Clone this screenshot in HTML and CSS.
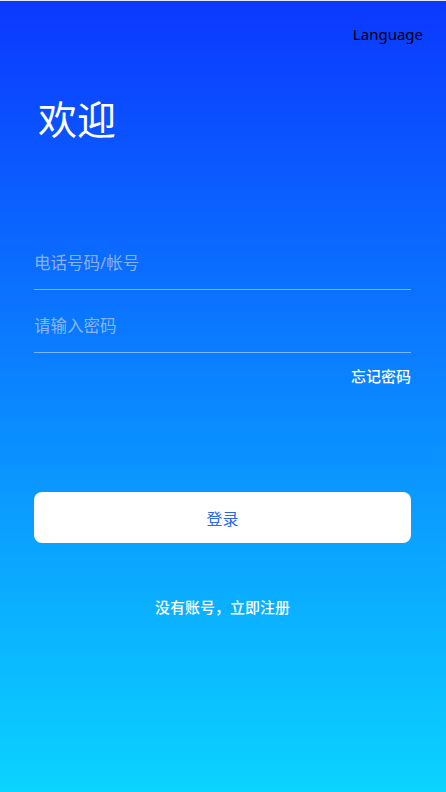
FILE: index.html
```html
<!DOCTYPE html>
<html lang="zh-CN">
<head>
    <meta charset="UTF-8">
    <meta name="viewport" content="width=device-width, initial-scale=1.0">
    <title>登录</title>
    <link rel="stylesheet" href="styles.css">
</head>
<body>
    <div class="login">
        <div class="login-top">
            <span class="language">Language</span>
        </div>
        <h1 class="welcome">欢迎</h1>
        <form class="login-form">
            <div class="field">
                <input type="text" placeholder="电话号码/帐号">
            </div>
            <div class="field">
                <input type="password" placeholder="请输入密码">
            </div>
            <div class="forgot">忘记密码</div>
            <button type="button" class="login-btn">登录</button>
        </form>
        <div class="register">没有账号，立即注册</div>
    </div>
</body>
</html>
```

FILE: styles.css
```css
* {
    box-sizing: border-box;
}
body {
    margin: 0;
    font-family: "Noto Sans", "Noto Sans CJK SC", sans-serif;
}
.login {
    height: 792px;
    border-top: 1px solid #e4e6ee;
    background: linear-gradient(to bottom, #0b38ff 0%, #0ad4ff 100%);
    padding: 0 35px 0 34px;
}
.login-top {
    display: flex;
    justify-content: flex-end;
    padding-top: 22px;
    margin-right: -12px;
}
.language {
    font-size: 15px;
    color: #000;
    line-height: 22px;
}
.welcome {
    margin: 46px 0 0 4px;
    font-size: 39px;
    font-weight: normal;
    color: #fff;
    line-height: 56px;
}
.login-form {
    margin-top: 89px;
}
.field {
    border-bottom: 1px solid rgba(255, 255, 255, 0.45);
    height: 63px;
    display: flex;
    align-items: flex-end;
}
.field:first-child {
    height: 54px;
}
.field input {
    width: 100%;
    border: none;
    outline: none;
    background: transparent;
    font-family: inherit;
    font-size: 16.5px;
    color: #fff;
    padding: 0;
    margin-bottom: 15px;
    height: 24px;
}
.field input::placeholder {
    color: rgba(210, 220, 240, 0.65);
}
.forgot {
    text-align: right;
    font-size: 15px;
    font-weight: 500;
    color: #fff;
    margin-top: 13px;
    line-height: 20px;
}
.login-btn {
    display: block;
    width: 100%;
    height: 51px;
    margin-top: 106px;
    border: none;
    border-radius: 8px;
    background: #fff;
    color: #2a67f0;
    font-family: inherit;
    font-size: 16px;
    cursor: pointer;
}
.register {
    text-align: center;
    font-size: 15px;
    font-weight: 500;
    color: #fff;
    margin-top: 54px;
    line-height: 20px;
}
```
